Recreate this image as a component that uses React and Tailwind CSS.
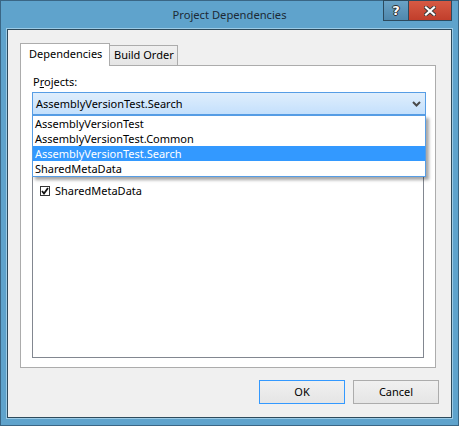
import React from "react";

function CloseGlyph() {
  return (
    <svg width="12" height="10" viewBox="0 0 12 10">
      <path d="M2 1.5 L10 8.5 M10 1.5 L2 8.5" stroke="#3a3a3a" strokeWidth="4" strokeLinecap="square" fill="none" />
      <path d="M2 1.5 L10 8.5 M10 1.5 L2 8.5" stroke="#ffffff" strokeWidth="2.2" strokeLinecap="square" fill="none" />
    </svg>
  );
}

function Chevron() {
  return (
    <svg width="9" height="6" viewBox="0 0 9 6">
      <path d="M1 1 L4.5 4.5 L8 1" stroke="#4a4a4a" strokeWidth="2" fill="none" />
    </svg>
  );
}

function CheckBox() {
  return (
    <div className="w-[10px] h-[10px] border border-[#333] bg-white flex items-center justify-center">
      <svg width="8" height="8" viewBox="0 0 8 8">
        <path d="M1 4 L3 6.5 L7 1" stroke="#111" strokeWidth="1.8" fill="none" />
      </svg>
    </div>
  );
}

const items = ["AssemblyVersionTest", "AssemblyVersionTest.Common", "AssemblyVersionTest.Search", "SharedMetaData"];

export default function App() {
  return (
    <div className="relative w-[459px] h-[426px] border border-[#3a6685] bg-[#5fa3cc] flex flex-col px-[5px] pb-[6px] font-['Noto_Sans',sans-serif] text-[11px] text-black">
      {/* title bar */}
      <div className="h-[27px] shrink-0 flex items-center justify-center pt-[2px] text-[11.2px] text-[#1c2a36]">
        Project Dependencies
      </div>
      <div className="absolute top-[-1px] right-[6px] flex h-[21px] border border-[#2c4a5e]">
        <div className="w-[25px] h-full bg-gradient-to-b from-[#6aa2c6] to-[#4f88ad] border-r border-[#2c4a5e] flex items-center justify-center">
          <span className="font-['DejaVu_Sans',sans-serif] font-bold text-[13px] leading-none text-white [text-shadow:0_0_1px_#222,1px_0_0_#333,-1px_0_0_#333,0_1px_0_#333,0_-1px_0_#333]">
            ?
          </span>
        </div>
        <div className="w-[42px] h-full bg-gradient-to-b from-[#d65a44] to-[#c13e2b] flex items-center justify-center">
          <CloseGlyph />
        </div>
      </div>

      {/* client */}
      <div className="flex-1 border border-[#9ccbe6]">
        <div className="h-full border border-[#2d4a5c] bg-[#f0f0f0] flex flex-col">
          {/* tabs */}
          <div className="ml-[12px] mt-[13px] h-[22px] flex items-end">
            <div className="relative z-10 h-[23px] w-[90px] -mb-px bg-white border border-b-0 border-[#acacac] pl-[8px] pt-[2px] leading-[16px]">
              Dependencies
            </div>
            <div className="h-[20px] w-[68px] bg-gradient-to-b from-[#f0f0f0] to-[#e5e5e5] border border-l-0 border-b-0 border-[#acacac] pl-[4px] pt-[1px] leading-[16px]">
              Build Order
            </div>
          </div>
          {/* panel */}
          <div className="ml-[12px] w-[416px] h-[303px] bg-white border border-[#acacac] flex flex-col">
            <div className="ml-[12px] mt-[8px] h-[16px] leading-[16px]">
              P<u>r</u>ojects:
            </div>
            <div className="relative z-20 ml-[11px] mt-[2px] w-[394px] h-[23px]">
              <div className="h-full border border-[#569de5] bg-gradient-to-b from-[#dfeefc] to-[#c4e0fc] flex items-center justify-between pl-[3px] pr-[4px]">
                <span className="leading-[16px]">AssemblyVersionTest.Search</span>
                <Chevron />
              </div>
              <div className="absolute left-0 top-full w-full border border-[#569de5] bg-white shadow-[3px_3px_3px_rgba(0,0,0,0.35)]">
                {items.map((t, i) => (
                  <div
                    key={t}
                    className={
                      i === 2
                        ? "h-[15px] leading-[15px] pl-[2px] bg-[#3399ff] text-white"
                        : "h-[15px] leading-[15px] pl-[2px]"
                    }
                  >
                    {t}
                  </div>
                ))}
              </div>
            </div>
            {/* label "Depends on:" lies under the open drop-down */}
            <div className="mt-[14px] h-[16px]" />
            <div className="ml-[11px] mt-[1px] w-[392px] h-[212px] border border-[#828790] bg-white pt-[35px]">
              <div className="h-[17px] flex items-center pl-[7px] gap-[5px]">
                <CheckBox />
                <span className="leading-[16px]">SharedMetaData</span>
              </div>
            </div>
          </div>
          {/* buttons */}
          <div className="mt-[12px] flex justify-end gap-[8px] pr-[12px]">
            <div className="w-[86px] h-[24px] border border-[#3399ff] bg-gradient-to-b from-[#f0f0f0] to-[#e5e5e5] flex items-center justify-center">
              OK
            </div>
            <div className="w-[86px] h-[24px] border border-[#acacac] bg-gradient-to-b from-[#f0f0f0] to-[#e5e5e5] flex items-center justify-center">
              Cancel
            </div>
          </div>
        </div>
      </div>
    </div>
  );
}
